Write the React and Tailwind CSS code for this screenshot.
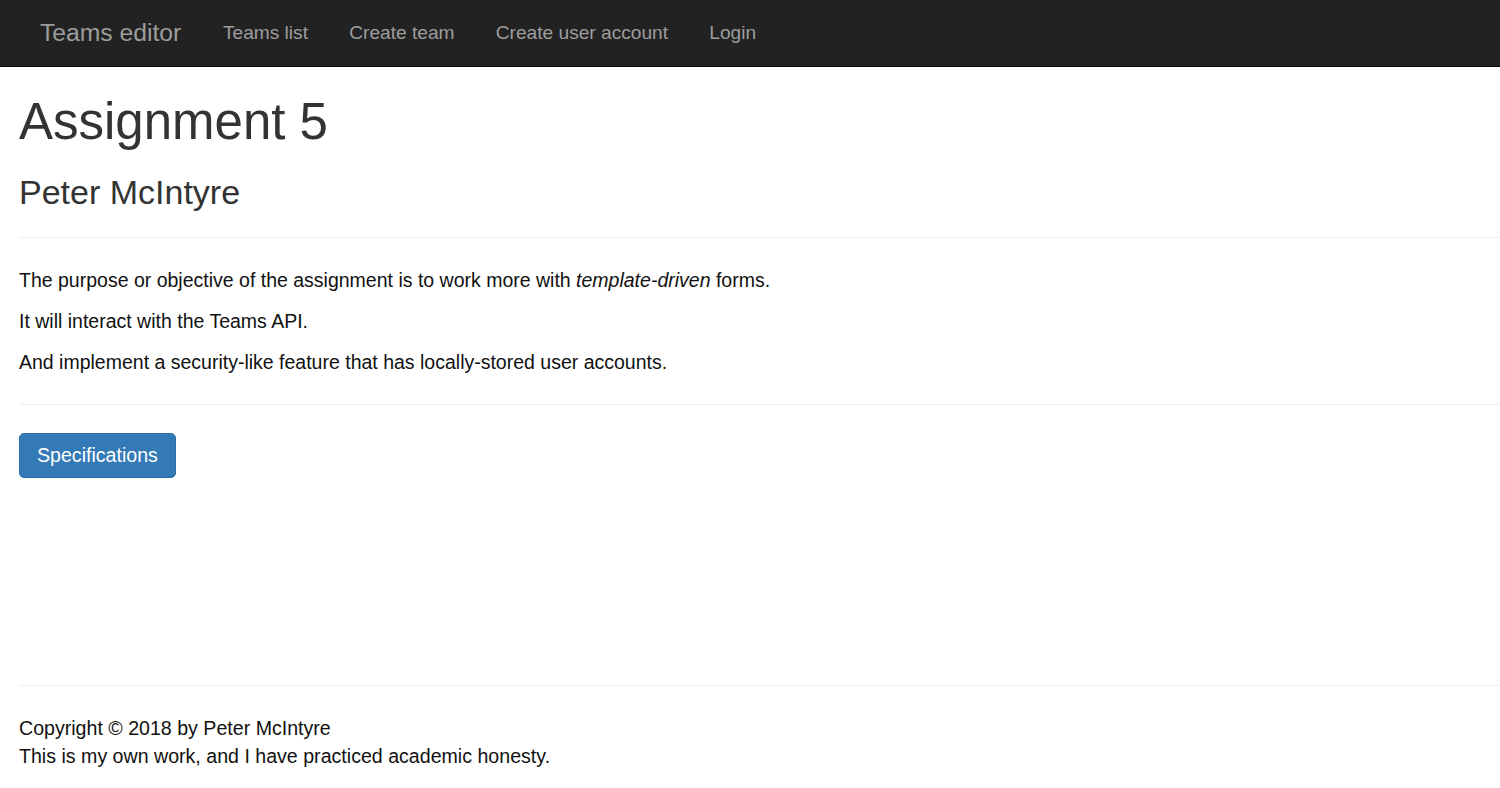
export default function App() {
  const font = { fontFamily: '"Liberation Sans", Arial, Helvetica, sans-serif' };
  return (
    <div className="min-h-[788px] bg-white" style={font}>
      <nav className="h-[67px] bg-[#222222] border-b border-[#080808] flex items-center px-[20px]">
        <a className="pl-[20px] pr-[21px] text-[24.7px] leading-[26px] text-[#9d9d9d] pb-[1px]">Teams editor</a>
        <ul className="flex items-center">
          <li><a className="block px-[20.6px] text-[19.15px] text-[#9d9d9d]">Teams list</a></li>
          <li><a className="block px-[20.6px] text-[19.15px] text-[#9d9d9d]">Create team</a></li>
          <li><a className="block px-[20.6px] text-[19.15px] text-[#9d9d9d]">Create user account</a></li>
          <li><a className="block px-[20.6px] text-[19.15px] text-[#9d9d9d]">Login</a></li>
        </ul>
      </nav>
      <main className="pl-[19px] pt-[26.5px] flex flex-col">
        <h1 className="text-[51px] leading-[56px] text-[#333333] font-normal">Assignment 5</h1>
        <h3 className="mt-[24.5px] text-[34px] leading-[37.4px] text-[#333333] font-normal">Peter McIntyre</h3>
        <hr className="mt-[25.6px] border-t border-[#eeeeee]" />
        <div className="mt-[29px] text-[19.5px] leading-[26.67px] text-[#111111]">
          <p className="mb-[14.33px]">
            The purpose or objective of the assignment is to work more with <em>template-driven</em> forms.
          </p>
          <p className="mb-[14.33px]">It will interact with the Teams API.</p>
          <p>And implement a security-like feature that has locally-stored user accounts.</p>
        </div>
        <hr className="mt-[28px] border-t border-[#eeeeee]" />
        <div className="mt-[28px]">
          <button className="bg-[#337ab7] border border-[#2e6da4] rounded-[5px] px-[17px] py-[8.5px] text-[19.6px] leading-[26.67px] text-white">
            Specifications
          </button>
        </div>
        <hr className="mt-[207px] border-t border-[#eeeeee]" />
        <footer className="mt-[28px] text-[19.6px] leading-[28px] text-[#111111]">
          <p>Copyright © 2018 by Peter McIntyre</p>
          <p>This is my own work, and I have practiced academic honesty.</p>
        </footer>
      </main>
    </div>
  );
}
